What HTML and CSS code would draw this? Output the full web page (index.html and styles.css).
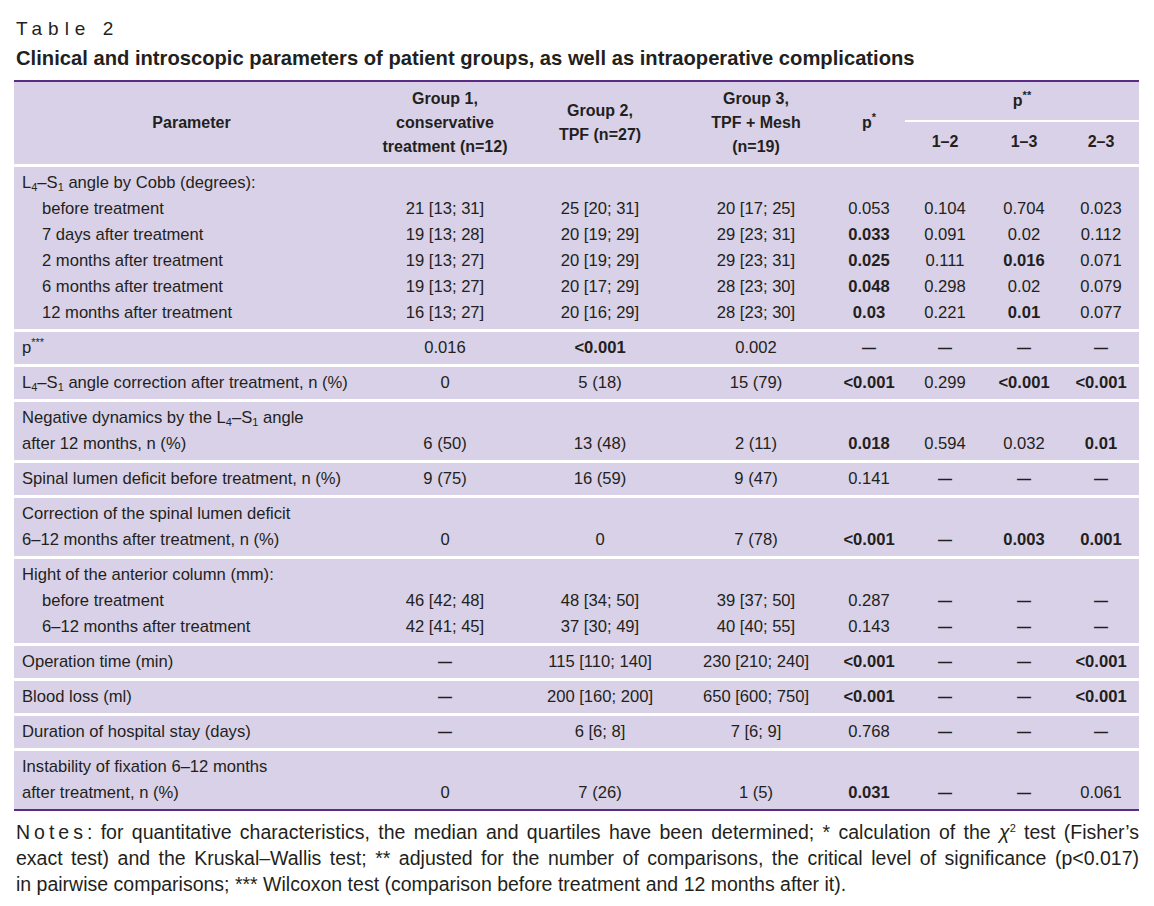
FILE: index.html
```html
<!DOCTYPE html>
<html lang="en">
<head>
<meta charset="utf-8">
<title>Table 2</title>
<link rel="stylesheet" href="styles.css">
</head>
<body>
<div class="page">
  <div class="label">Table 2</div>
  <h1 class="title">Clinical and introscopic parameters of patient groups, as well as intraoperative complications</h1>
  <table class="data">
    <colgroup>
      <col class="c-param"><col class="c-g1"><col class="c-g2"><col class="c-g3"><col class="c-p"><col class="c-12"><col class="c-13"><col class="c-23">
    </colgroup>
    <thead>
      <tr class="h1row">
        <th rowspan="2">Parameter</th>
        <th rowspan="2">Group 1,<br>conservative<br>treatment (n=12)</th>
        <th rowspan="2">Group 2,<br>TPF (n=27)</th>
        <th rowspan="2">Group 3,<br>TPF + Mesh<br>(n=19)</th>
        <th rowspan="2">p<sup>*</sup></th>
        <th colspan="3" class="pp">p<sup>**</sup></th>
      </tr>
      <tr class="h2row">
        <th>1–2</th>
        <th>1–3</th>
        <th>2–3</th>
      </tr>
    </thead>
    <tbody>
      <tr>
        <td class="param">L<sub>4</sub>–S<sub>1</sub> angle by Cobb (degrees):<br><span class="ind">before treatment</span><br><span class="ind">7 days after treatment</span><br><span class="ind">2 months after treatment</span><br><span class="ind">6 months after treatment</span><br><span class="ind">12 months after treatment</span></td>
        <td>21 [13; 31]<br>19 [13; 28]<br>19 [13; 27]<br>19 [13; 27]<br>16 [13; 27]</td>
        <td>25 [20; 31]<br>20 [19; 29]<br>20 [19; 29]<br>20 [17; 29]<br>20 [16; 29]</td>
        <td>20 [17; 25]<br>29 [23; 31]<br>29 [23; 31]<br>28 [23; 30]<br>28 [23; 30]</td>
        <td>0.053<br><b>0.033</b><br><b>0.025</b><br><b>0.048</b><br><b>0.03</b></td>
        <td>0.104<br>0.091<br>0.111<br>0.298<br>0.221</td>
        <td>0.704<br>0.02<br><b>0.016</b><br>0.02<br><b>0.01</b></td>
        <td>0.023<br>0.112<br>0.071<br>0.079<br>0.077</td>
      </tr>
      <tr>
        <td class="param">p<sup>***</sup></td>
        <td>0.016</td><td><b>&lt;0.001</b></td><td>0.002</td><td><span class="na">—</span></td><td><span class="na">—</span></td><td><span class="na">—</span></td><td><span class="na">—</span></td>
      </tr>
      <tr>
        <td class="param">L<sub>4</sub>–S<sub>1</sub> angle correction after treatment, n (%)</td>
        <td>0</td><td>5 (18)</td><td>15 (79)</td><td><b>&lt;0.001</b></td><td>0.299</td><td><b>&lt;0.001</b></td><td><b>&lt;0.001</b></td>
      </tr>
      <tr>
        <td class="param">Negative dynamics by the L<sub>4</sub>–S<sub>1</sub> angle<br>after 12 months, n (%)</td>
        <td>6 (50)</td><td>13 (48)</td><td>2 (11)</td><td><b>0.018</b></td><td>0.594</td><td>0.032</td><td><b>0.01</b></td>
      </tr>
      <tr>
        <td class="param">Spinal lumen deficit before treatment, n (%)</td>
        <td>9 (75)</td><td>16 (59)</td><td>9 (47)</td><td>0.141</td><td><span class="na">—</span></td><td><span class="na">—</span></td><td><span class="na">—</span></td>
      </tr>
      <tr>
        <td class="param">Correction of the spinal lumen deficit<br>6–12 months after treatment, n (%)</td>
        <td>0</td><td>0</td><td>7 (78)</td><td><b>&lt;0.001</b></td><td><span class="na">—</span></td><td><b>0.003</b></td><td><b>0.001</b></td>
      </tr>
      <tr>
        <td class="param">Hight of the anterior column (mm):<br><span class="ind">before treatment</span><br><span class="ind">6–12 months after treatment</span></td>
        <td>46 [42; 48]<br>42 [41; 45]</td><td>48 [34; 50]<br>37 [30; 49]</td><td>39 [37; 50]<br>40 [40; 55]</td><td>0.287<br>0.143</td><td><span class="na">—</span><br><span class="na">—</span></td><td><span class="na">—</span><br><span class="na">—</span></td><td><span class="na">—</span><br><span class="na">—</span></td>
      </tr>
      <tr>
        <td class="param">Operation time (min)</td>
        <td><span class="na">—</span></td><td>115 [110; 140]</td><td>230 [210; 240]</td><td><b>&lt;0.001</b></td><td><span class="na">—</span></td><td><span class="na">—</span></td><td><b>&lt;0.001</b></td>
      </tr>
      <tr>
        <td class="param">Blood loss (ml)</td>
        <td><span class="na">—</span></td><td>200 [160; 200]</td><td>650 [600; 750]</td><td><b>&lt;0.001</b></td><td><span class="na">—</span></td><td><span class="na">—</span></td><td><b>&lt;0.001</b></td>
      </tr>
      <tr>
        <td class="param">Duration of hospital stay (days)</td>
        <td><span class="na">—</span></td><td>6 [6; 8]</td><td>7 [6; 9]</td><td>0.768</td><td><span class="na">—</span></td><td><span class="na">—</span></td><td><span class="na">—</span></td>
      </tr>
      <tr>
        <td class="param">Instability of fixation 6–12 months<br>after treatment, n (%)</td>
        <td>0</td><td>7 (26)</td><td>1 (5)</td><td><b>0.031</b></td><td><span class="na">—</span></td><td><span class="na">—</span></td><td>0.061</td>
      </tr>
    </tbody>
  </table>
  <div class="notes">
    <span class="nline full"><span class="spaced">Notes</span>: for quantitative characteristics, the median and quartiles have been determined; * calculation of the <i>χ</i><sup>2</sup> test (Fisher’s</span>
    <span class="nline full">exact test) and the Kruskal–Wallis test; ** adjusted for the number of comparisons, the critical level of significance (p&lt;0.017)</span>
    <span class="nline">in pairwise comparisons; *** Wilcoxon test (comparison before treatment and 12 months after it).</span>
  </div>
</div>
</body>
</html>
```
FILE: styles.css
```css
html, body {
  margin: 0;
  padding: 0;
  background: #ffffff;
}
.page {
  width: 1125px;
  padding: 16px 0 0 14px;
  color: #231f20;
  font-family: "Liberation Sans", Arial, sans-serif;
}
.label {
  font-size: 19px;
  letter-spacing: 6px;
  line-height: 26px;
  padding-left: 2px;
}
.title {
  font-size: 20.2px;
  font-weight: bold;
  line-height: 24px;
  margin: 4px 0 0 0;
  padding-left: 2px;
}
.data {
  margin-top: 10px;
  width: 1125px;
  table-layout: fixed;
  border-collapse: collapse;
  background: #d9d1e7;
  border-top: 2px solid #5b2b86;
  border-bottom: 2px solid #5b2b86;
  font-size: 16.6px;
}
.c-param { width: 355px; }
.c-g1 { width: 152px; }
.c-g2 { width: 158px; }
.c-g3 { width: 154px; }
.c-p { width: 72px; }
.c-12 { width: 80px; }
.c-13 { width: 78px; }
.c-23 { width: 76px; }
.data th {
  font-size: 16px;
  font-weight: bold;
  line-height: 24px;
  padding: 5px 0;
  text-align: center;
  vertical-align: middle;
}
.data .h1row .pp {
  padding: 7px 0 6px;
  vertical-align: top;
}
.data .h2row th {
  border-top: 2px solid #ffffff;
  padding: 8px 0 9px;
}
.data td {
  border-top: 3px solid #ffffff;
  padding: 3px 0;
  line-height: 26px;
  text-align: center;
  vertical-align: bottom;
  white-space: nowrap;
}
.data td.param {
  text-align: left;
  vertical-align: top;
  padding-left: 8px;
}
.ind { padding-left: 20px; }
.na {
  font-weight: bold;
  font-size: 14px;
}
sub {
  font-size: 11px;
  vertical-align: -3px;
  line-height: 0;
}
sup {
  font-size: 11px;
  vertical-align: 7px;
  line-height: 0;
}
.notes {
  margin-top: 8px;
  font-size: 19.5px;
  line-height: 26px;
  padding-left: 2px;
}
.nline {
  display: block;
  text-align: left;
  white-space: nowrap;
}
.nline.full {
  text-align: justify;
  text-align-last: justify;
}
.spaced { letter-spacing: 4px; }
```
